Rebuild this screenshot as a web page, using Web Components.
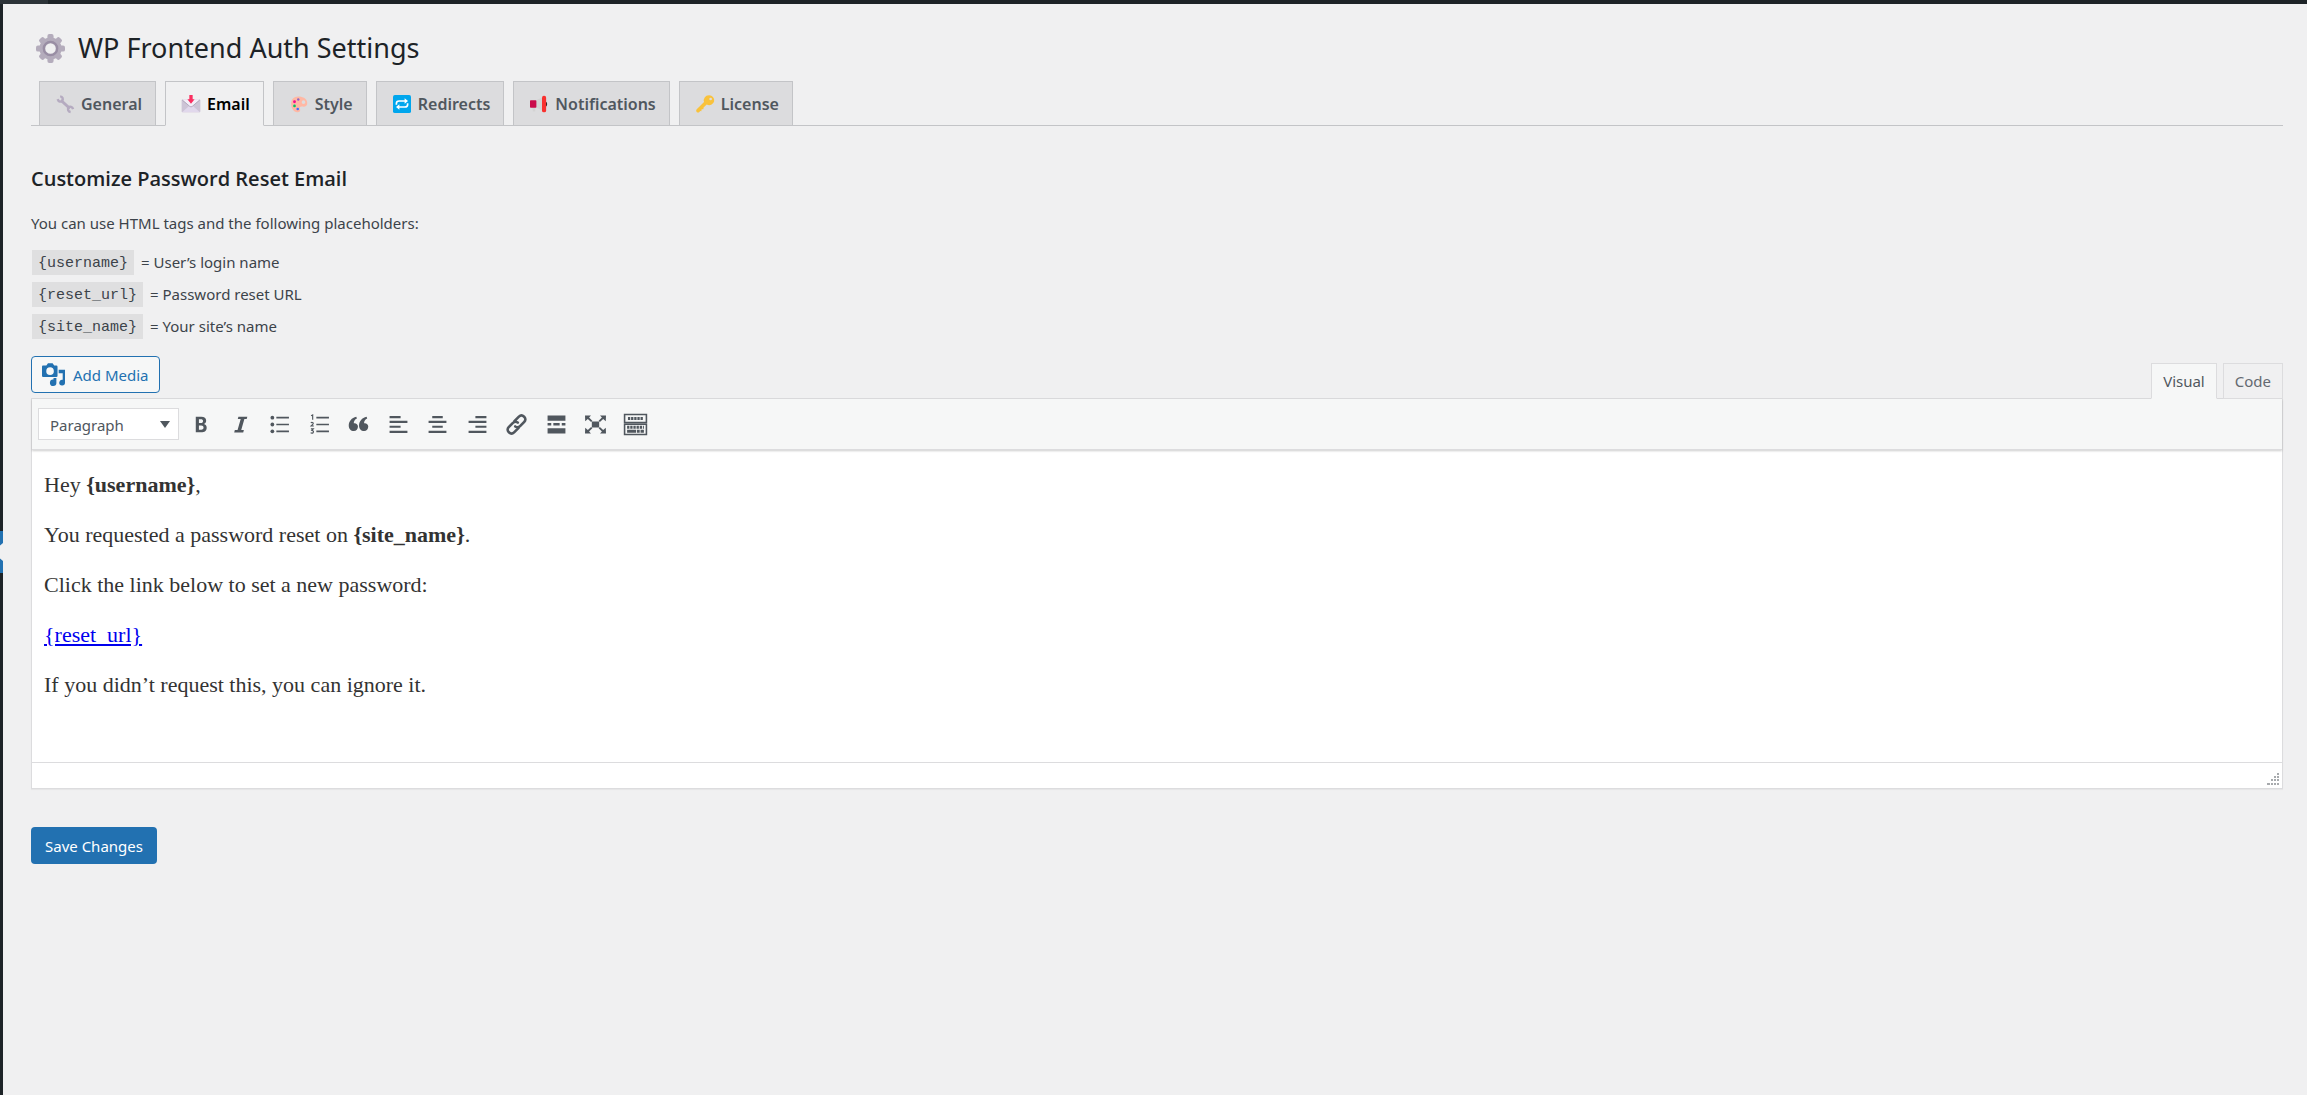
<!DOCTYPE html>
<html lang="en">
<head>
<meta charset="utf-8">
<title>WP Frontend Auth Settings</title>
<style>
  html, body { height: 100%; }
  body {
    margin: 0;
    background: #f0f0f1;
    color: #3c434a;
    font: 15px/24px "Noto Sans", "Open Sans", sans-serif;
  }
</style>
</head>
<body>
<wp-shell>
  <settings-title>WP Frontend Auth Settings</settings-title>
  <nav-tabs>
    <nav-tab icon="wrench">General</nav-tab>
    <nav-tab icon="envelope" active>Email</nav-tab>
    <nav-tab icon="palette">Style</nav-tab>
    <nav-tab icon="repeat">Redirects</nav-tab>
    <nav-tab icon="megaphone">Notifications</nav-tab>
    <nav-tab icon="key">License</nav-tab>
  </nav-tabs>
  <email-help></email-help>
  <mail-editor></mail-editor>
  <save-button>Save Changes</save-button>
</wp-shell>

<script>
const emoji = {
  wrench: '<path stroke="#b5abc0" stroke-width="4" d="m6.500 7 12 11"/><path fill="none" stroke="#b5abc0" stroke-width="3.200" d="M5.500 1.800c3.400.5 4.400 3.600 2.800 5.800C6.400 9.800 3.200 9 2.200 5.600M22.800 18.800c-1-3.400-4.200-4.200-6-2-1.700 2.200-.7 5.300 2.700 5.800"/>',
  envelope: '<rect x="-.5" y="6" width="25" height="17" rx="1.200" fill="#cdc4d6"/><path fill="#e1d8ec" d="m0 23 9.500-8.500h5L24 23z"/><path fill="#f3eef8" d="M0 6h24L13.500 15.500q-1.500 1-3 0z"/><path fill="none" stroke="#998ea4" stroke-width=".9" d="m.3 6.600 10.200 8.700q1.500 1 3 0L23.700 6.600"/><path fill="#f92f60" d="M9.800 0h4.400v5.500h2.600L12 11.500 7.200 5.500h2.600z"/>',
  palette: '<path fill="#ffb8a4" fill-rule="evenodd" d="M11 2C4 2 1 7 1.600 13c.4 5 3.400 9.500 7.900 10 5 .5 4.300-3.500 3.600-5.200-.6-1.700.9-3 3.100-2.500 3.700.8 7.200-.6 6.800-5C22.500 5 17.500 2 11 2zm7 5.100a2.400 2.400 0 1 1 0 4.800 2.400 2.400 0 0 1 0-4.800z"/><circle cx="11" cy="6" r="1.600" fill="#8d65c5"/><circle cx="6" cy="9" r="1.900" fill="#f70a8d"/><circle cx="6" cy="14.600" r="1.800" fill="#00c462"/><circle cx="10.300" cy="18.600" r="1.700" fill="#3f70ff"/>',
  repeat: '<rect width="24" height="24" rx="2.500" fill="#00a6ed"/><path fill="none" stroke="#fff" stroke-width="2.200" d="M4.500 13v-1.500q0-3.500 3.500-3.500h8M19.500 11v1.500q0 3.500-3.500 3.500H8"/><path fill="#fff" d="M15.500 4.300 20 8l-4.500 3.700zM8.500 12.300 4 16l4.500 3.700z"/>',
  megaphone: '<path fill="#d3d3d3" d="M8 7 17 3v18L8 16.500zM3 16h4v6H4z"/><rect y="7" width="8.500" height="10" rx="1" fill="#ca0b4a"/><path fill="#212121" d="M20 8.500c3.800 0 3.800 7 0 7z"/><rect x="16" y="1" width="5.500" height="22" rx="2.500" fill="#f8312f"/>',
  key: '<path fill="#f9c23c" fill-rule="evenodd" d="M17 .5a6.600 6.600 0 0 0-6.300 8.800L1 19c-2.200 2.500 1 5.900 3.500 3.500l1-1.300 1.600.3.400-2.400 2.300-.1.300-2.200 4.200-4.100A6.600 6.600 0 1 0 17 .5zm2.500 3a1.800 1.800 0 1 1 0 3.600 1.800 1.800 0 0 1 0-3.600z"/>'
};

const glyphs = [
  ['Bold', '<path d="M5.500 2.500h5.200c3.100 0 4.700 1.300 4.700 3.700 0 1.700-.8 2.800-2.200 3.300 1.700.4 2.700 1.600 2.700 3.500 0 2.800-2 4.400-5.300 4.400H5.500zm3 2.400v3.700h1.900c1.300 0 2-.6 2-1.900 0-1.200-.7-1.800-2.100-1.800zm0 6v4h2.200c1.500 0 2.200-.7 2.200-2 0-1.300-.8-2-2.300-2z"/>'],
  ['Italic', '<path d="M8 2.500h8.500l-.6 2.200h-2.200l-3 10.600h2.500l-.6 2.200H4l.6-2.200h2.600l3-10.600H7.400z"/>'],
  ['Bulleted list', '<circle cx="3.200" cy="3.500" r="1.800"/><circle cx="3.200" cy="10" r="1.800"/><circle cx="3.200" cy="16.500" r="1.800"/><path d="M7 2.700h12v1.600H7zm0 6.500h12v1.600H7zm0 6.500h12v1.600H7z"/>'],
  ['Numbered list', '<path d="M7 2.700h12v1.600H7zm0 6.500h12v1.600H7zm0 6.500h12v1.600H7z"/><path fill="none" stroke="currentColor" stroke-width="1.100" d="m2 1.600 1.500-.8V5.500M1.800 8.600c.6-.9 2.500-.7 2.200.6-.2.800-1.400 1.500-2 2.200h2.600M1.800 14.200h2.300l-1.300 1.500c2 0 1.800 2.600 0 2.500-.6 0-1-.2-1.200-.4"/>'],
  ['Blockquote', '<path d="M8.500 4.200c-2 .8-3 2.500-3 4.600 1.900-.5 4 .9 4 3.200 0 2.300-1.600 4.300-3.900 4.300C2.700 16.300.7 14 .7 10.900c0-4 2.800-7.500 7.200-8.400zM18.300 4.200c-2 .8-3 2.500-3 4.600 1.900-.5 4 .9 4 3.200 0 2.300-1.600 4.300-3.900 4.300-2.900 0-4.900-2.300-4.900-5.400 0-4 2.800-7.500 7.200-8.400z"/>'],
  ['Align left', '<path d="M1.500 2H12v2H1.500zm0 4.500h17v2h-17zm0 4.700H12v2H1.500zm0 4.800h17v2h-17z"/>'],
  ['Align center', '<path d="M5 2h10v2H5zM1.500 6.500h17v2h-17zM5 11.200h10v2H5zM1.500 16h17v2h-17z"/>'],
  ['Align right', '<path d="M8 2h10.500v2H8zM1.500 6.500h17v2h-17zM8 11.200h10.500v2H8zM1.500 16h17v2h-17z"/>'],
  ['Insert link', '<path fill="none" stroke="currentColor" stroke-width="2.500" stroke-linecap="round" d="m8 6.800 4.300-4.300c3.200-3.200 8.300 1.700 5.100 5l-4 4c-1.300 1.300-3.200 1.300-4.600.4M12 13.200l-4.300 4.300c-3.200 3.200-8.300-1.700-5.100-5l4-4c1.300-1.300 3.200-1.300 4.600-.4"/>'],
  ['Read more tag', '<path d="M1.500 1.500h17v5h-17zm0 12h17v5h-17zm0-5H5v2.500H1.500zm5.500 0h6V11H7zm8 0h3.500V11H15z"/>'],
  ['Fullscreen', '<path d="M6.500 7.200h7v5.600h-7zM0 1.500h5.700L3.900 3.400 7 6.400 5.800 7.600 2.700 4.700.2 7zM20 1.500h-5.700l1.800 1.900L13 6.400l1.200 1.200 3.100-2.900L19.800 7zM0 18.500h5.700l-1.800-1.900L7 13.600l-1.200-1.200-3.100 2.900L.2 13zM20 18.500h-5.700l1.800-1.900-3.100-3 1.200-1.200 3.100 2.900 2.500-2.300z"/>'],
  ['Toolbar toggle', '<path fill="none" stroke="currentColor" stroke-width="1.500" d="M-.4.500h20.800v7.600H-.4zM-.4 9.700h20.800v9.800H-.4z"/><path stroke="currentColor" stroke-width="3" stroke-dasharray="2.200 .8" d="M2.800 4.300h14.400"/><path stroke="currentColor" stroke-width="2.800" stroke-dasharray="2.200 .8" d="M2 12.700h16"/><path stroke="currentColor" stroke-width="2.800" d="M2 16.400h8.500m.8 0H14m.8 0H18"/>']
];

function define(name, html, setup) {
  const template = document.createElement('template');
  template.innerHTML = html;
  customElements.define(name, class extends HTMLElement {
    constructor() {
      super();
      this.attachShadow({ mode: 'open' }).append(template.content.cloneNode(true));
    }
    connectedCallback() { if (setup) setup(this, this.shadowRoot); }
  });
}

define('wp-shell', `
<style>
  :host { display: grid; grid-template: 4px 1fr / 3px 1fr; min-height: 100vh; }
  header { grid-column: 1 / -1; background: #1d2327; }
  header i { display: block; width: 48px; height: 4px; background: #2c3338; }
  aside { background: #1d2327; padding-top: 527px; }
  aside svg { display: block; }
  main { padding: 20px 24px 48px 28px; min-width: 0; }
</style>
<header><i></i></header>
<aside><svg width="3" height="42"><path fill="#2271b1" d="M0 0h3v42H0z"/><path fill="#f0f0f1" d="M3 12v18L0 27.500v-13z"/></svg></aside>
<main><slot></slot></main>`);

define('settings-title', `
<style>
  :host { display: block; }
  h1 { margin: 0; padding-left: 5px; display: flex; align-items: center; gap: 13px; color: #1d2327; font-size: 27px; line-height: 48px; font-weight: 400; }
  svg { width: 29px; height: 29px; }
</style>
<h1>
  <svg viewBox="0 0 30 30" aria-hidden="true">
    <g fill="#b4acbc"><circle cx="15" cy="15" r="11.500"/>
    <g><rect x="11.800" width="6.400" height="30" rx="2"/><rect y="11.800" width="30" height="6.400" rx="2"/></g>
    <g transform="rotate(45 15 15)"><rect x="11.800" y=".3" width="6.400" height="29.400" rx="2"/><rect x=".3" y="11.800" width="29.400" height="6.400" rx="2"/></g></g>
    <circle cx="15" cy="15" r="6.800" fill="#f0f0f1" stroke="#998ea4" stroke-width="2.600"/>
  </svg>
  <slot></slot>
</h1>`);

define('nav-tabs', `
<style>
  :host { display: block; }
  nav { display: flex; gap: 9px; padding: 9px 8px 0; border-bottom: 1px solid #c3c4c7; }
</style>
<nav><slot></slot></nav>`);

define('nav-tab', `
<style>
  :host { display: block; margin-bottom: -1px; }
  a { display: flex; align-items: center; gap: 7px; height: 42px; padding: 1px 13px 0 16px; border: 1px solid #c3c4c7; background: #dcdcde; color: #50575e; font-size: 16px; font-weight: 600; text-decoration: none; }
  :host([active]) a { background: #f0f0f1; border-bottom-color: #f0f0f1; color: #000; }
  svg { width: 18px; height: 18px; overflow: visible; }
</style>
<a href="#"><svg viewBox="0 0 24 24" aria-hidden="true"></svg><span><slot></slot></span></a>`,
(host, root) => { root.querySelector('svg').innerHTML = emoji[host.getAttribute('icon')]; });

define('email-help', `
<style>
  :host { display: block; }
  h2 { margin: 0; padding: 40px 0 0; font: 600 20px/26px "Open Sans", sans-serif; color: #1d2327; }
  p { margin: 19px 0 15px; line-height: 24px; }
  ul { list-style: none; margin: 0; padding: 0 0 0 1px; display: grid; gap: 7px; }
  li { display: flex; gap: 7px; line-height: 25px; }
  code { padding: 0 6px; background: #dfdfe0; font: 15px/28px "Liberation Mono", monospace; height: 25px; }
</style>
<h2>Customize Password Reset Email</h2>
<p>You can use HTML tags and the following placeholders:</p>
<ul>
  <li><code>{username}</code><span>= User’s login name</span></li>
  <li><code>{reset_url}</code><span>= Password reset URL</span></li>
  <li><code>{site_name}</code><span>= Your site’s name</span></li>
</ul>`);

define('mail-editor', `
<style>
  :host { display: block; padding-top: 17px; }
  .tools { display: flex; justify-content: space-between; align-items: flex-end; }
  button { font: inherit; cursor: pointer; }
  .media { display: flex; align-items: center; gap: 8px; height: 37px; margin-bottom: 5px; padding: 0 10px; border: 1px solid #2271b1; border-radius: 4px; background: #f6f7f7; color: #2271b1; }
  .media svg { width: 23px; height: 23px; fill: #2271b1; }
  .modes { display: flex; gap: 6px; margin-bottom: -1px; position: relative; }
  .modes button { height: 36px; padding: 0 11px; border: 1px solid #dcdcde; background: #f0f0f1; color: #646970; }
  .modes .on { background: #f6f7f7; border-bottom-color: #f6f7f7; color: #50575e; }
  .frame { border: 1px solid #dcdcde; background: #fff; box-shadow: 0 1px 1px rgba(0,0,0,.04); }
  .bar { display: flex; align-items: center; gap: 2px; height: 50px; padding-left: 6px; background: #f6f7f7; border-bottom: 1px solid #dcdcde; box-shadow: 0 1px 2px rgba(0,0,0,.2); }
  .pick { display: grid; align-items: center; width: 141px; }
  .pick > * { grid-area: 1 / 1; }
  select { appearance: none; box-sizing: border-box; width: 100%; height: 32px; padding: 1px 11px 0; border: 1px solid #dcdcde; border-radius: 0; background: #fff; color: #50575e; font: inherit; }
  .pick svg { justify-self: end; margin-right: 9px; width: 10px; height: 7px; fill: #50575e; pointer-events: none; }
  .icons { display: grid; grid-template-columns: repeat(12, 1fr); width: 474px; }
  .icons button { display: grid; place-items: center; padding: 0; height: 34px; border: 0; background: none; color: #50575e; }
  .icons svg { width: 21px; height: 21px; fill: currentColor; overflow: visible; }
  .body { padding: 20px 12px 42px; color: #333; font: 22px/30px "Liberation Serif", serif; outline: 0; }
  .body p { margin: 0 0 20px; }
  .body a { color: #00e; }
  .status { display: flex; justify-content: flex-end; align-items: flex-end; height: 25px; border-top: 1px solid #dcdcde; }
  .status svg { margin: 0 3px 3px; width: 12px; height: 12px; fill: #a7aaad; }
</style>
<div class="tools">
  <button class="media" type="button"><svg viewBox="0 0 20 20" aria-hidden="true"><path fill-rule="evenodd" d="M.8 2.200h3L5.200.3h4L10.600 2.200h1.900q1 0 1 1v8q0 1-1 1H1q-1 0-1-1v-8q0-1 .8-1zm6.200 1.600a3.300 3.300 0 1 0 0 6.600 3.300 3.300 0 0 0 0-6.600z"/><path d="M14.500 5.800H20V17a2.500 2.500 0 1 1-2-2.400V9h-3.500zM10 13h2.500v4a2.800 2.800 0 1 1-2.500-2.600z"/></svg>Add Media</button>
  <div class="modes"><button class="on" type="button">Visual</button><button type="button">Code</button></div>
</div>
<div class="frame">
  <div class="bar">
    <div class="pick">
      <select aria-label="Block format"><option>Paragraph</option><option>Heading 1</option><option>Heading 2</option></select>
      <svg viewBox="0 0 10 7" aria-hidden="true"><path d="M0 0h10L5 7z"/></svg>
    </div>
    <div class="icons"></div>
  </div>
  <div class="body" contenteditable="true" spellcheck="false" role="textbox" aria-label="Email body">
    <p>Hey <strong>{username}</strong>,</p>
    <p>You requested a password reset on <strong>{site_name}</strong>.</p>
    <p>Click the link below to set a new password:</p>
    <p><a href="#">{reset_url}</a></p>
    <p>If you didn’t request this, you can ignore it.</p>
  </div>
  <div class="status"><svg viewBox="0 0 12 12" aria-hidden="true"><path d="M10 0h2v2h-2zM7 3h2v2H7zm3 0h2v2h-2zM4 6h2v2H4zm3 0h2v2H7zm3 0h2v2h-2zM0 10h3v2H0zm4 0h2v2H4zm3 0h2v2H7zm3 0h2v2h-2z"/></svg></div>
</div>`,
(host, root) => {
  root.querySelector('.icons').innerHTML = glyphs.map(([label, shape]) =>
    `<button type="button" aria-label="${label}"><svg viewBox="0 0 20 20" aria-hidden="true">${shape}</svg></button>`).join('');
});

define('save-button', `
<style>
  :host { display: block; padding-top: 38px; }
  button { height: 37px; padding: 0 14px; border: 0; border-radius: 4px; background: #2271b1; color: #fff; font: inherit; cursor: pointer; }
</style>
<button type="submit"><slot></slot></button>`);
</script>
</body>
</html>
